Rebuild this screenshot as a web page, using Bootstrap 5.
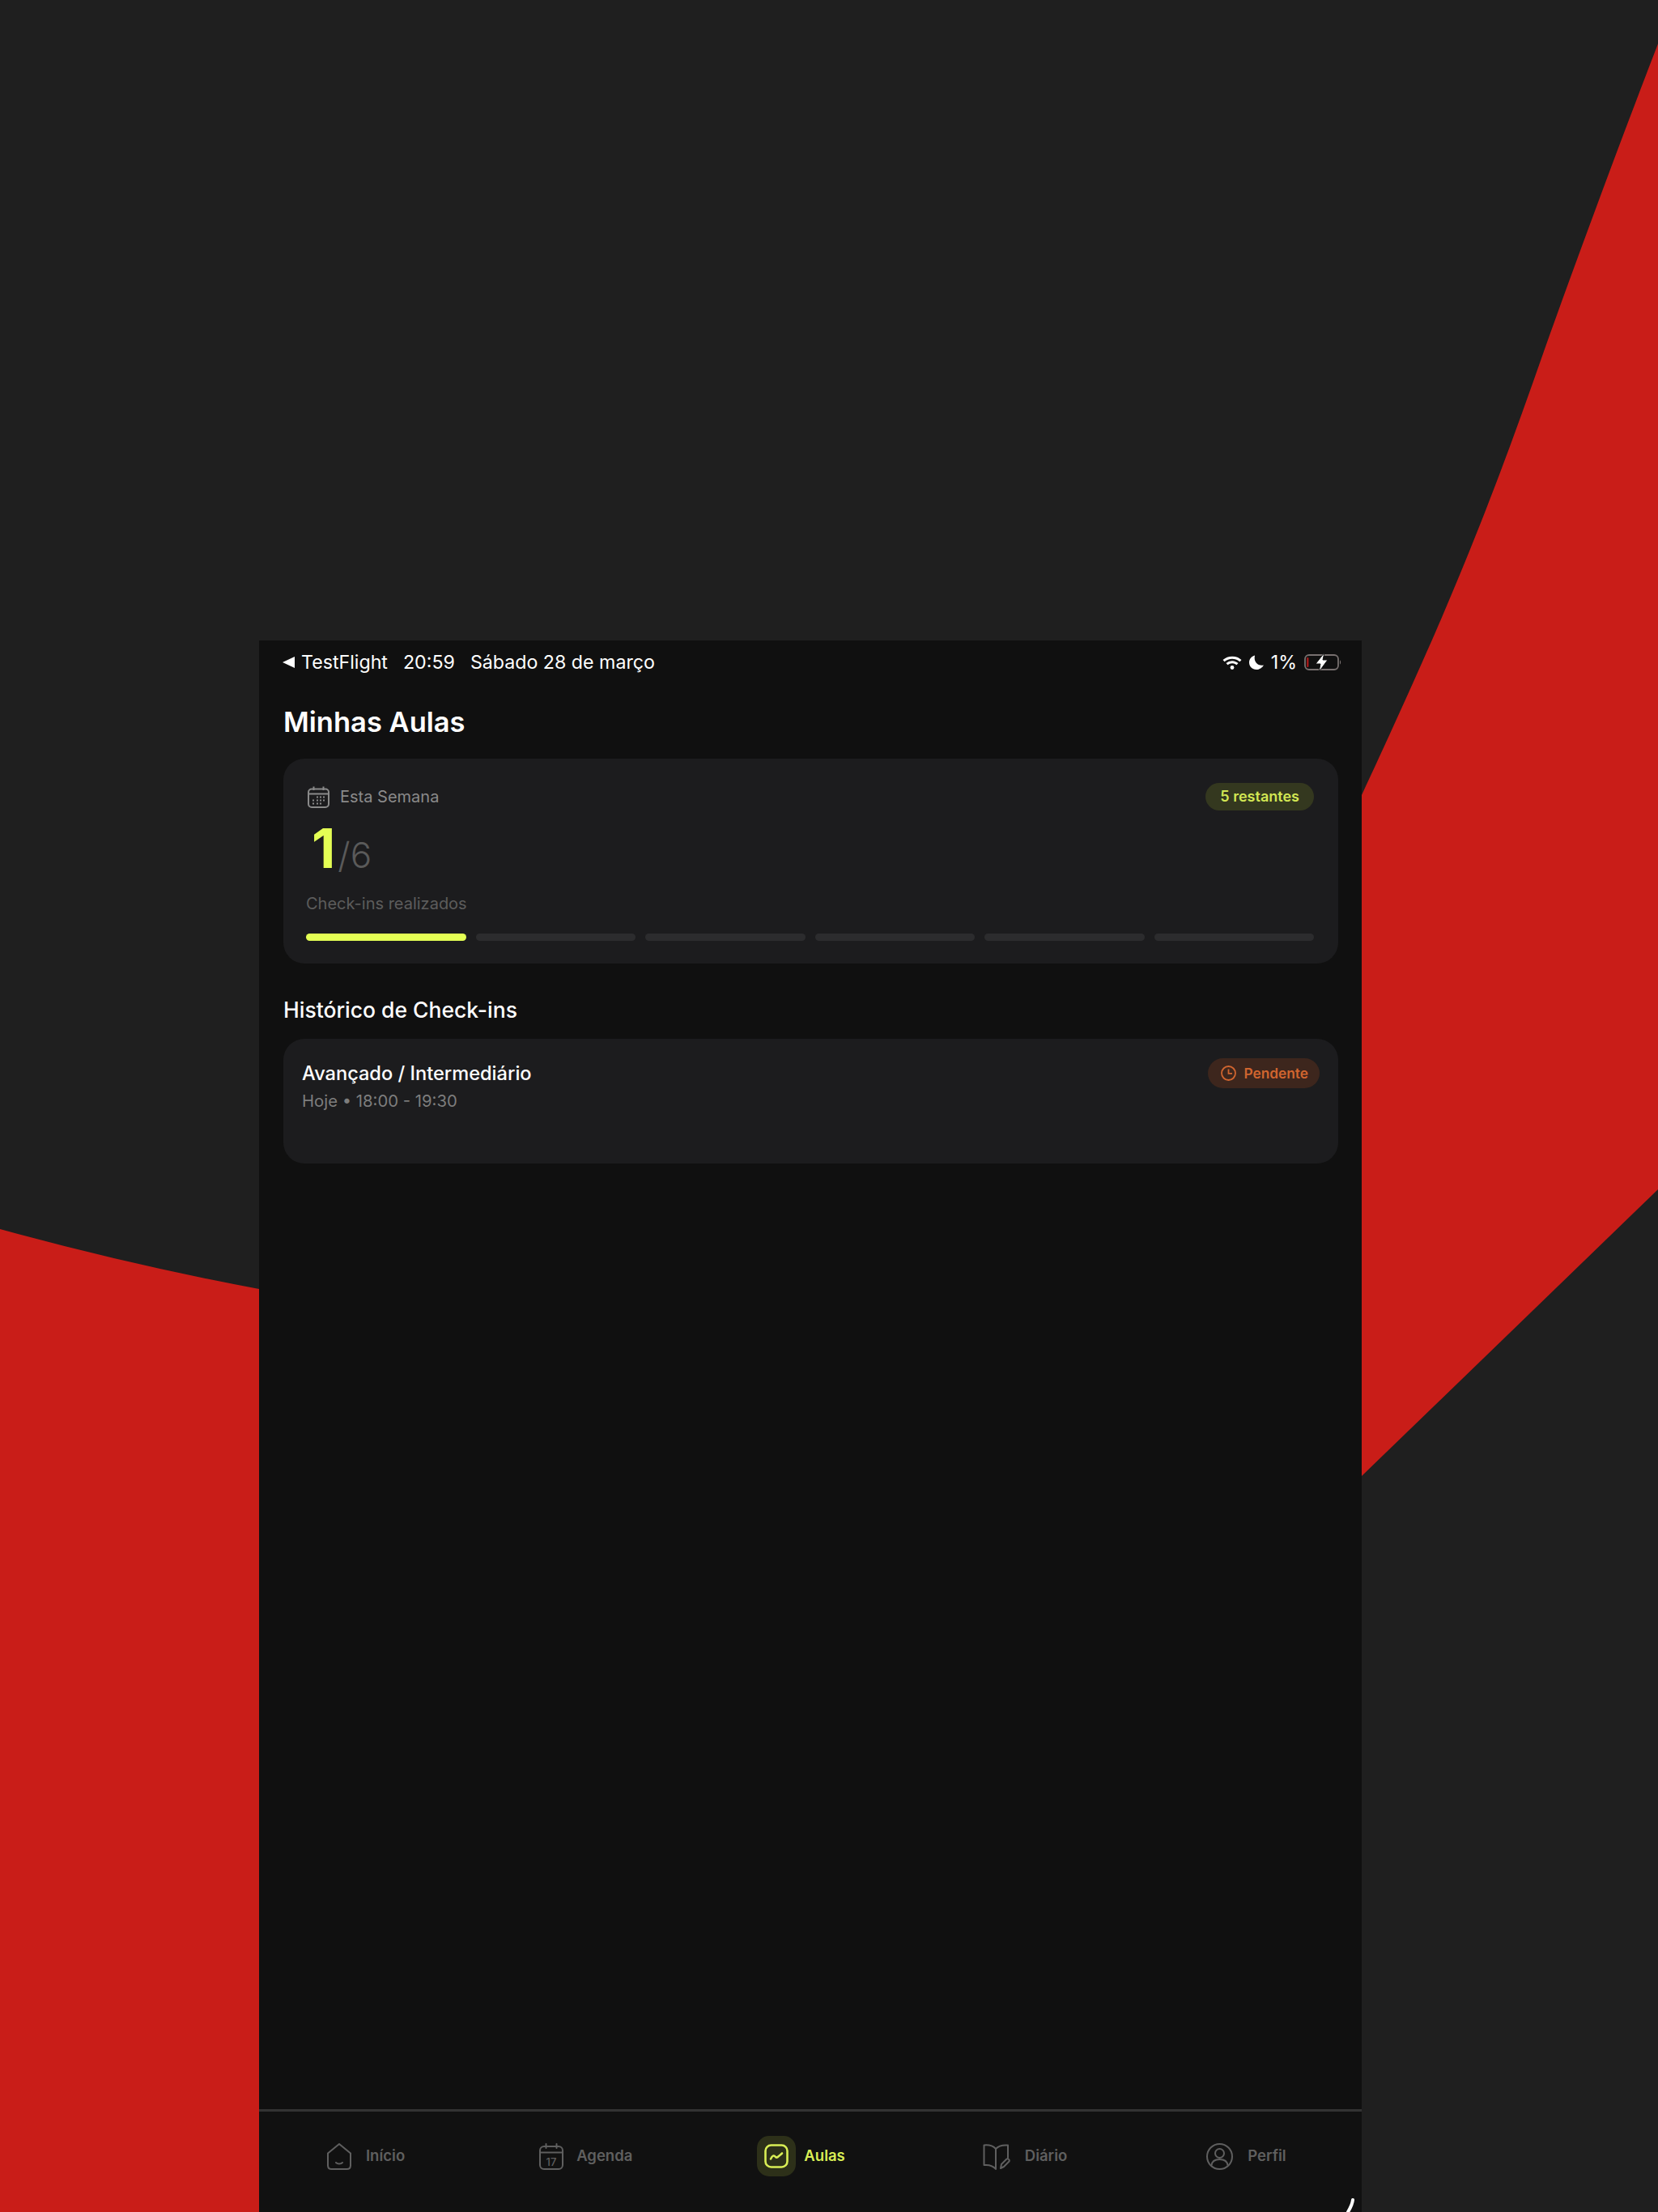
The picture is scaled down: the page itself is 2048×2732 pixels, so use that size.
<!DOCTYPE html>
<html lang="pt-BR">
<head>
    <meta charset="UTF-8">
    <meta name="viewport" content="width=device-width, initial-scale=1.0">
    <title>Minhas Aulas</title>
    <link href="https://cdn.jsdelivr.net/npm/bootstrap@5.3.0/dist/css/bootstrap.min.css" rel="stylesheet">
    <style>
        body {
            font-family: Inter, "Liberation Sans", sans-serif;
            background-color: #1f1f1f;
            color: #fff;
            margin: 0;
            width: 2048px;
            height: 2732px;
            overflow: hidden;
            position: relative;
        }
        .backdrop {
            position: absolute;
            left: 0;
            top: 0;
        }
        .tablet-screen {
            position: relative;
            margin-left: 320px;
            padding-top: 791px;
            width: 1362px;
            height: 2732px;
        }
        .screen-inner {
            background-color: #101010;
            height: 1941px;
        }
        .status-bar {
            height: 54px;
            padding: 0 25px 0 29px;
            font-size: 23.2px;
            line-height: 54px;
        }
        .status-left {
            gap: 19px;
        }
        .back-app {
            gap: 8px;
        }
        .status-right {
            gap: 9px;
        }
        .page-body {
            padding: 0 29px 0 30px;
        }
        .page-title {
            font-size: 34.5px;
            font-weight: 600;
            line-height: 44px;
            margin: 25px 0 23px;
        }
        .panel {
            background-color: #1c1c1e;
            border-radius: 26px;
        }
        .week-panel {
            padding: 30px 30px 28px 28px;
            height: 253px;
        }
        .week-label {
            font-size: 20px;
            color: #8a8a8a;
            gap: 13px;
            margin-left: 2px;
        }
        .pill-green {
            background-color: #34381f;
            color: #d2e653;
            font-size: 18px;
            font-weight: 600;
            height: 34px;
            line-height: 34px;
            padding: 0 18px;
            border-radius: 17px;
        }
        .count-row {
            margin-top: 10px;
            margin-left: 7px;
            line-height: 72px;
            height: 72px;
        }
        .count-now {
            font-size: 68px;
            font-weight: 700;
            color: #e4ff54;
        }
        .count-total {
            font-size: 44px;
            font-weight: 300;
            color: #5a5a5a;
            margin-left: 3px;
        }
        .count-note {
            font-size: 20px;
            line-height: 30px;
            color: #5c5c5c;
            margin-top: 18px;
        }
        .week-bars {
            margin-top: 22px;
            gap: 12px;
        }
        .week-bar {
            height: 9px;
            border-radius: 5px;
            background-color: #2c2c2e;
        }
        .week-bar.done {
            background-color: #e4ff54;
        }
        .section-title {
            font-size: 26.5px;
            font-weight: 500;
            line-height: 36px;
            margin: 39px 0 18px;
        }
        .class-panel {
            height: 154px;
            padding: 24px 23px;
        }
        .class-name {
            font-size: 23.6px;
            font-weight: 500;
            line-height: 34px;
            margin-top: 2px;
        }
        .class-time {
            font-size: 20.3px;
            line-height: 30px;
            color: #7d7d7d;
            margin-top: 2px;
        }
        .pill-orange {
            background-color: #3d261d;
            color: #d0652f;
            font-size: 17.3px;
            font-weight: 600;
            height: 37px;
            padding: 0 14px 0 16px;
            border-radius: 19px;
            gap: 9px;
        }
        .tab-bar {
            border-top: 3px solid #333;
            height: 127px;
            padding: 30px 0 0 84px;
            gap: 168px;
            background-color: #111;
        }
        .tab-item {
            height: 50px;
            gap: 18px;
            color: #5f5f5f;
            font-size: 18.5px;
            font-weight: 600;
        }
        .tab-agenda {
            margin-left: -2px;
            gap: 16px;
        }
        .tab-item.active {
            color: #d9ee55;
            margin: 0 2px 0 -14px;
            gap: 10px;
        }
        .tab-perfil {
            margin-left: 4px;
        }
        .tab-icon-wrap {
            width: 48px;
            height: 50px;
            border-radius: 15px;
            background-color: #2d3019;
        }
        .home-mark {
            position: absolute;
            right: 8px;
            bottom: 0;
        }
    </style>
</head>
<body>
<!-- fundo vermelho atras do app -->
<svg class="backdrop" width="2048" height="2732" viewBox="0 0 2048 2732">
    <path d="M2048 54C2004 168 1946 324 1907 434C1870 540 1830 650 1773 781C1745 845 1710 922 1682 982L1682 1823L2048 1469Z" fill="#c91d18"/>
    <path d="M0 1518Q160 1562 320 1592L320 2732L0 2732Z" fill="#c91d18"/>
</svg>

<div class="tablet-screen">
    <div class="screen-inner d-flex flex-column">
        <div class="status-bar d-flex justify-content-between align-items-center flex-shrink-0">
            <div class="status-left d-flex align-items-center">
                <span class="back-app d-flex align-items-center">
                    <svg width="15" height="14" viewBox="0 0 15 14"><path d="M15 0V14L0 7Z" fill="#fff"/></svg>
                    <span>TestFlight</span>
                </span>
                <span>20:59</span>
                <span>Sábado 28 de março</span>
            </div>
            <div class="status-right d-flex align-items-center">
                <svg width="24" height="17" viewBox="0 0 24 17" fill="none" stroke="#fff" stroke-width="3">
                    <path d="M1.500 6.200C7.500 .8 16.500 .8 22.500 6.200"/>
                    <path d="M5.500 10.200C9.200 7 14.800 7 18.500 10.200"/>
                    <circle cx="12" cy="14.500" r="2.400" fill="#fff" stroke="none"/>
                </svg>
                <svg width="18" height="18" viewBox="0 0 18 18"><path d="M7 .5C3 1.500 0 5 0 9.200C0 14 4 18 8.800 18C12.800 18 16.200 15.400 18 12.400C12 14 5 9.500 7 .5Z" fill="#fff"/></svg>
                <span>1%</span>
                <svg width="46" height="24" viewBox="0 0 46 24" fill="none">
                    <rect x="1" y="3" width="41" height="18" rx="5" stroke="#77706f" stroke-width="1.800"/>
                    <rect x="3" y="6" width="2.500" height="12" rx="1" fill="#a01818"/>
                    <path d="M44 9.500C45.500 10 45.500 14 44 14.500Z" fill="#77706f"/>
                    <path d="M25 0L14 14H20L18 24L29 9H23Z" fill="#fff" stroke="#101010" stroke-width="1"/>
                </svg>
            </div>
        </div>

        <div class="page-body flex-grow-1">
            <h1 class="page-title">Minhas Aulas</h1>

            <div class="panel week-panel">
                <div class="d-flex justify-content-between align-items-center">
                    <div class="week-label d-flex align-items-center">
                        <svg width="27" height="27" viewBox="0 0 27 27" fill="none" stroke="#8a8a8a" stroke-width="2">
                            <rect x="1" y="3.500" width="25" height="22.500" rx="4"/>
                            <path d="M1 9.500H26M7.500 .5V5M19.500 .5V5"/>
                            <path d="M11 13.500H13M15 13.500H17M19 13.500H21M6 17.500H8M11 17.500H13M15 17.500H17M19 17.500H21M6 21.500H8M11 21.500H13M15 21.500H17" stroke-width="1.800"/>
                        </svg>
                        <span>Esta Semana</span>
                    </div>
                    <span class="pill-green">5 restantes</span>
                </div>
                <div class="count-row d-flex align-items-baseline">
                    <span class="count-now">1</span>
                    <span class="count-total">/6</span>
                </div>
                <div class="count-note">Check-ins realizados</div>
                <div class="week-bars d-flex">
                    <div class="week-bar done flex-fill"></div>
                    <div class="week-bar flex-fill"></div>
                    <div class="week-bar flex-fill"></div>
                    <div class="week-bar flex-fill"></div>
                    <div class="week-bar flex-fill"></div>
                    <div class="week-bar flex-fill"></div>
                </div>
            </div>

            <h2 class="section-title">Histórico de Check-ins</h2>

            <div class="panel class-panel d-flex justify-content-between align-items-start">
                <div>
                    <div class="class-name">Avançado / Intermediário</div>
                    <div class="class-time">Hoje • 18:00 - 19:30</div>
                </div>
                <span class="pill-orange d-flex align-items-center">
                    <svg width="19" height="19" viewBox="0 0 19 19" fill="none" stroke="#d0652f" stroke-width="1.800">
                        <circle cx="9.500" cy="9.500" r="8.500"/>
                        <path d="M9.500 4.500V9.800H14"/>
                    </svg>
                    <span>Pendente</span>
                </span>
            </div>
        </div>

        <nav class="tab-bar d-flex align-items-start flex-shrink-0">
            <div class="tab-item d-flex align-items-center">
                <svg width="30" height="33" viewBox="0 0 30 33" fill="none" stroke="#5f5f5f" stroke-width="2" stroke-linejoin="round" stroke-linecap="round">
                    <path d="M1 12.500L15 1L29 12.500V27.500C29 30.500 27 32 24.500 32H5.500C3 32 1 30.500 1 27.500Z"/>
                    <path d="M11 24C13 26 17 26 19 24"/>
                </svg>
                <span>Início</span>
            </div>
            <div class="tab-item tab-agenda d-flex align-items-center">
                <svg width="30" height="33" viewBox="0 0 30 33" fill="none" stroke="#5f5f5f" stroke-width="2" stroke-linecap="round">
                    <rect x="1" y="4" width="28" height="28" rx="5"/>
                    <path d="M1 11.500H29M8.500 1V6M21.500 1V6"/>
                    <text x="15" y="27.500" text-anchor="middle" font-size="13" font-weight="500" fill="#5f5f5f" stroke="none" font-family="Inter, sans-serif">17</text>
                </svg>
                <span>Agenda</span>
            </div>
            <div class="tab-item active d-flex align-items-center">
                <span class="tab-icon-wrap d-flex align-items-center justify-content-center">
                    <svg width="30" height="30" viewBox="0 0 30 30" fill="none" stroke="#d9ee55" stroke-width="2.600" stroke-linecap="round" stroke-linejoin="round">
                        <rect x="1.500" y="1.500" width="27" height="27" rx="7"/>
                        <path d="M8 18.500C10 14 12 13.500 14 16C16 18 18 15 22 11.500"/>
                    </svg>
                </span>
                <span>Aulas</span>
            </div>
            <div class="tab-item d-flex align-items-center">
                <svg width="34" height="33" viewBox="0 0 34 33" fill="none" stroke="#5f5f5f" stroke-width="2" stroke-linejoin="round" stroke-linecap="round">
                    <path d="M16 7C12.500 3 7 2 1.500 2.500V27C7 26.500 12.500 27.500 16 32V7C19.500 3 25 2 31 2.500V18"/>
                    <path d="M22 31L23 26L29.500 19.500C31 18.500 33.500 20.500 32.500 22.500L26 29Z"/>
                </svg>
                <span>Diário</span>
            </div>
            <div class="tab-item tab-perfil d-flex align-items-center">
                <svg width="33" height="33" viewBox="0 0 33 33" fill="none" stroke="#5f5f5f" stroke-width="2">
                    <circle cx="16.500" cy="16.500" r="15.500"/>
                    <circle cx="16.500" cy="12.500" r="5.500"/>
                    <path d="M6.500 27.500C7 22 11 20 16.500 20C22 20 26 22 26.500 27.500"/>
                </svg>
                <span>Perfil</span>
            </div>
        </nav>
    </div>
    <svg class="home-mark" width="12" height="17" viewBox="0 0 12 17" fill="none" stroke="#fff" stroke-width="4" stroke-linecap="round"><path d="M9 2C8.500 7 6 12 3 17"/></svg>
</div>

<script src="https://cdn.jsdelivr.net/npm/bootstrap@5.3.0/dist/js/bootstrap.bundle.min.js"></script>
</body>
</html>
